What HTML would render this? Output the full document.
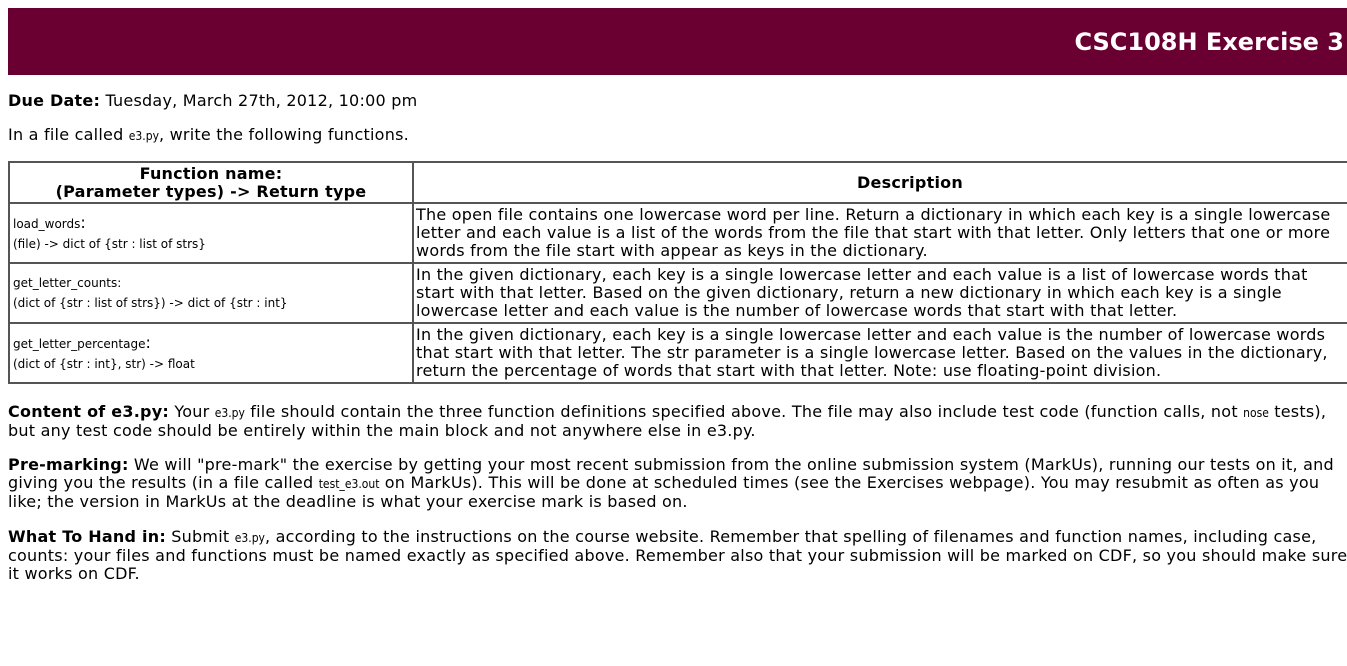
<!DOCTYPE html>
<html><head><meta charset="utf-8"><style>
html,body{margin:0;padding:0;background:#fff;overflow:hidden;width:1347px;height:666px}
body{font-family:"DejaVu Sans","Liberation Sans",sans-serif;font-size:16px;letter-spacing:0.23px;color:#000;line-height:18px;position:relative}
.hdr{position:absolute;left:8px;top:8px;width:1345px;height:67px;background:#6a0032}
.hdr h1{position:absolute;right:9px;top:19px;margin:0;color:#fff;font-size:24px;line-height:30px;font-weight:bold;letter-spacing:0;font-family:"DejaVu Sans",sans-serif}
p{position:absolute;left:8px;margin:0;width:1400px;white-space:nowrap}
.s{font-size:12px;letter-spacing:0;font-family:"DejaVu Sans Condensed","DejaVu Sans",sans-serif}
table{position:absolute;left:8px;top:161px;border-collapse:collapse;width:1400px}
td,th{border:2px solid #555;padding:0 2px;vertical-align:middle}
th{font-weight:bold;height:39px;line-height:18px}
td.a{width:397px;font-size:12px;letter-spacing:0;font-family:"DejaVu Sans","Liberation Sans",sans-serif;line-height:20px;height:58px;padding-left:3px}
td.a b{font-weight:normal;font-size:16px}
td.b{white-space:nowrap;line-height:18px;height:58px}
</style></head><body>
<div class="hdr"><h1>CSC108H Exercise 3</h1></div>
<p style="top:92px"><b>Due Date:</b> Tuesday, March 27th, 2012, 10:00 pm</p>
<p style="top:126px">In a file called <span class="s">e3.py</span>, write the following functions.</p>
<table>
<tr><th>Function name:<br>(Parameter types) -&gt; Return type</th><th>Description</th></tr>
<tr><td class="a">load_words<b>:</b><br>(file) -&gt; dict of {str : list of strs}</td><td class="b">The open file contains one lowercase word per line. Return a dictionary in which each key is a single lowercase<br>letter and each value is a list of the words from the file that start with that letter. Only letters that one or more<br>words from the file start with appear as keys in the dictionary.</td></tr>
<tr><td class="a">get_letter_counts:<br>(dict of {str : list of strs}) -&gt; dict of {str : int}</td><td class="b">In the given dictionary, each key is a single lowercase letter and each value is a list of lowercase words that<br>start with that letter. Based on the given dictionary, return a new dictionary in which each key is a single<br>lowercase letter and each value is the number of lowercase words that start with that letter.</td></tr>
<tr><td class="a">get_letter_percentage<b>:</b><br>(dict of {str : int}, str) -&gt; float</td><td class="b">In the given dictionary, each key is a single lowercase letter and each value is the number of lowercase words<br>that start with that letter. The str parameter is a single lowercase letter. Based on the values in the dictionary,<br>return the percentage of words that start with that letter. Note: use floating-point division.</td></tr>
</table>
<p style="top:403px"><b>Content of e3.py:</b> Your <span class="s">e3.py</span> file should contain the three function definitions specified above. The file may also include test code (function calls, not <span class="s">nose</span> tests),<br>but any test code should be entirely within the main block and not anywhere else in e3.py.</p>
<p style="top:456px"><b>Pre-marking:</b> We will "pre-mark" the exercise by getting your most recent submission from the online submission system (MarkUs), running our tests on it, and<br>giving you the results (in a file called <span class="s">test_e3.out</span> on MarkUs). This will be done at scheduled times (see the Exercises webpage). You may resubmit as often as you<br>like; the version in MarkUs at the deadline is what your exercise mark is based on.</p>
<p style="top:528px"><b>What To Hand in:</b> Submit <span class="s">e3.py</span>, according to the instructions on the course website. Remember that spelling of filenames and function names, including case,<br>counts: your files and functions must be named exactly as specified above. Remember also that your submission will be marked on CDF, so you should make sure<br>it works on CDF.</p>
</body></html>
